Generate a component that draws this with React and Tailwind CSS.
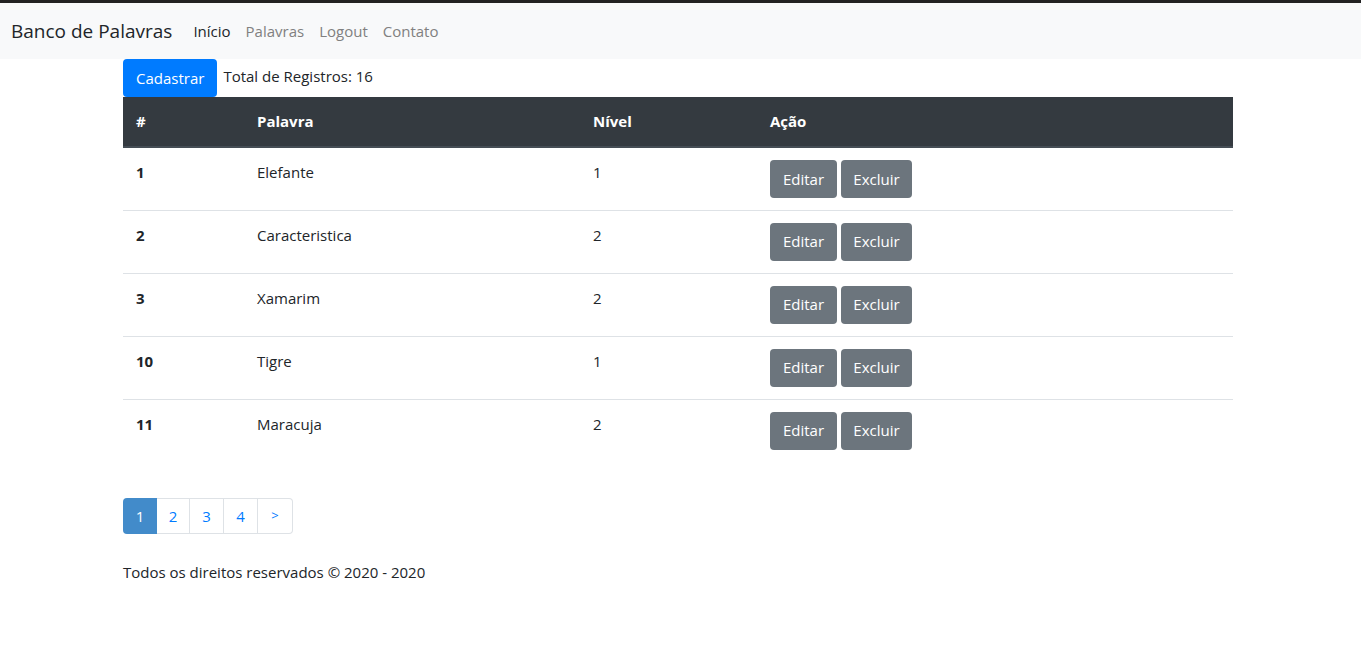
import React from 'react';

const rows = [
  { id: 1, palavra: 'Elefante', nivel: 1 },
  { id: 2, palavra: 'Caracteristica', nivel: 2 },
  { id: 3, palavra: 'Xamarim', nivel: 2 },
  { id: 10, palavra: 'Tigre', nivel: 1 },
  { id: 11, palavra: 'Maracuja', nivel: 2 },
];

export default function App() {
  return (
    <div className="min-h-screen bg-white text-[16px] text-[#212529] border-t-[3px] border-[#222]" style={{ fontFamily: '"Open Sans", "Noto Sans", sans-serif' }}>
      {/* Navbar */}
      <nav className="flex h-[56px] items-center bg-[#f8f9fa] px-[11px]">
        <span className="mr-[21px] text-[19px] text-[#212529]">Banco de Palavras</span>
        <ul className="flex gap-[15px] text-[15px]">
          <li className="text-[#212529]">Início</li>
          <li className="text-[#808080]">Palavras</li>
          <li className="text-[#808080]">Logout</li>
          <li className="text-[#808080]">Contato</li>
        </ul>
      </nav>

      <div className="ml-[123px] w-[1110px]">
        <div className="flex items-center gap-[6px]">
          <button className="h-[38px] rounded-[4px] bg-[#007bff] px-[13px] text-[15px] text-white">Cadastrar</button>
          <span className="text-[15px] -translate-y-[2px]">Total de Registros: 16</span>
        </div>

        <table className="w-full border-collapse text-[15px]">
          <thead>
            <tr className="h-[50px] bg-[#343a40] text-left text-white border-b-2 border-[#454d55]">
              <th className="w-[122px] px-[13px] font-bold">#</th>
              <th className="w-[336px] px-[12px] font-bold">Palavra</th>
              <th className="w-[177px] px-[12px] font-bold">Nível</th>
              <th className="px-[12px] font-bold">Ação</th>
            </tr>
          </thead>
          <tbody>
            {rows.map((r) => (
              <tr key={r.id} className="h-[63px] border-b border-[#dee2e6] align-top last:border-b-0">
                <td className="px-[13px] pt-[13px] font-bold">{r.id}</td>
                <td className="px-[12px] pt-[13px]">{r.palavra}</td>
                <td className="px-[12px] pt-[13px]">{r.nivel}</td>
                <td className="px-[12px] pt-[12px]">
                  <div className="flex gap-[4px]">
                    <button className="h-[38px] w-[67px] rounded-[4px] bg-[#6c757d] text-white">Editar</button>
                    <button className="h-[38px] w-[71px] rounded-[4px] bg-[#6c757d] text-white">Excluir</button>
                  </div>
                </td>
              </tr>
            ))}
          </tbody>
        </table>

        <ul className="mt-[36px] flex w-fit text-[15px]">
          <li className="flex h-[36px] w-[34px] items-center justify-center rounded-l-[4px] bg-[#428bca] text-white">1</li>
          <li className="flex h-[36px] w-[33px] items-center justify-center border border-l-0 border-[#dee2e6] text-[#007bff]">2</li>
          <li className="flex h-[36px] w-[34px] items-center justify-center border border-l-0 border-[#dee2e6] text-[#007bff]">3</li>
          <li className="flex h-[36px] w-[34px] items-center justify-center border border-l-0 border-[#dee2e6] text-[#007bff]">4</li>
          <li className="flex h-[36px] w-[35px] items-center justify-center rounded-r-[4px] border border-l-0 border-[#dee2e6] text-[13px] text-[#007bff]">&gt;</li>
        </ul>

        <footer className="mt-[27px] text-[15px]">Todos os direitos reservados © 2020 - 2020</footer>
      </div>
    </div>
  );
}
